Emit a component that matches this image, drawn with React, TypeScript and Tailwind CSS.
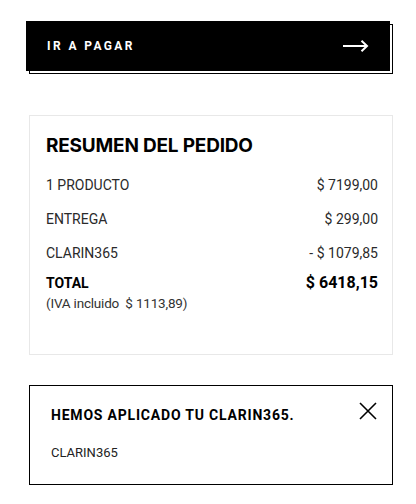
import React from 'react';

const rows = [
    { label: '1 PRODUCTO', value: '$ 7199,00' },
    { label: 'ENTREGA', value: '$ 299,00' },
    { label: 'CLARIN365', value: '- $ 1079,85' },
];

const ArrowRight = () => (
    <svg width="26" height="12" viewBox="0 0 26 12" fill="none" stroke="currentColor" strokeWidth="2">
        <path d="M0 6h24" />
        <path d="M18.5 0.8L24 6l-5.5 5.2" />
    </svg>
);

const CloseIcon = () => (
    <svg width="18" height="18" viewBox="0 0 18 18" fill="none" stroke="currentColor" strokeWidth="1.6">
        <path d="M1 1l16 16M17 1L1 17" />
    </svg>
);

export default function App() {
    return (
        <div className="w-[416px] h-[504px] bg-white overflow-hidden font-['Roboto',sans-serif] text-[#1a1a1a]">
            {/* checkout button with offset frame */}
            <div className="relative ml-[26px] mt-[21px] w-[364px] h-[50px]">
                <div className="absolute left-[3px] top-[3px] w-[364px] h-[50px] border border-black bg-white" />
                <button className="relative w-full h-full bg-black text-white flex items-center justify-between pl-[21px] pr-[21px]">
                    <span className="text-[12px] font-bold tracking-[2.4px] leading-none">IR A PAGAR</span>
                    <ArrowRight />
                </button>
            </div>

            {/* order summary */}
            <div className="ml-[29px] mt-[44px] w-[364px] h-[240px] border border-[#e8e8e8] pl-[16px] pr-[14px] pt-[18px]">
                <h2 className="font-['Inter',sans-serif] font-bold text-[19px] leading-[24px] tracking-[-0.2px] text-black">
                    RESUMEN DEL PEDIDO
                </h2>
                <div className="mt-[17px] flex flex-col gap-[14px]">
                    {rows.map((r) => (
                        <div key={r.label} className="flex justify-between text-[14px] leading-[20px] text-[#2a2a2a]">
                            <span>{r.label}</span>
                            <span>{r.value}</span>
                        </div>
                    ))}
                </div>
                <div className="mt-[10px] flex justify-between items-baseline text-black">
                    <span className="text-[14px] font-bold leading-[20px]">TOTAL</span>
                    <span className="text-[16px] font-bold leading-[20px]">$ 6418,15</span>
                </div>
                <div className="text-[13.5px] leading-[20px] text-[#333] whitespace-pre tracking-[-0.2px]">(IVA incluido  $ 1113,89)</div>
            </div>

            {/* applied code notice */}
            <div className="ml-[29px] mt-[30px] w-[364px] h-[100px] border border-black pl-[21px] pr-[15px] pt-[19px] flex justify-between">
                <div>
                    <div className="text-[14px] font-bold leading-[20px] tracking-[0.8px] text-black">
                        HEMOS APLICADO TU CLARIN365.
                    </div>
                    <div className="mt-[19px] text-[13px] leading-[18px] text-[#222]">CLARIN365</div>
                </div>
                <div className="text-black -mt-[3px]">
                    <CloseIcon />
                </div>
            </div>
        </div>
    );
}
